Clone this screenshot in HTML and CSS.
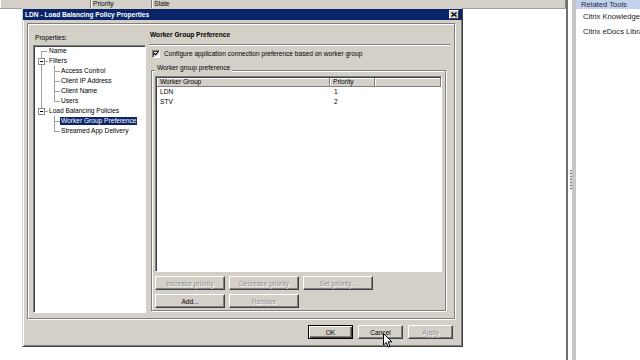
FILE: index.html
```html
<!DOCTYPE html>
<html lang="en">
<head>
    <meta charset="UTF-8">
    <title>LDN - Load Balancing Policy Properties</title>
    <link rel="stylesheet" href="styles.css">
</head>
<body>

    <div class="app">
        <div class="main">
            <div class="colhead">
                <span class="col c-name"></span>
                <span class="col c-prio">Priority</span>
                <span class="col c-state">State</span>
            </div>
            <div class="list"></div>
        </div>
        <div class="splitter"><span class="grip"></span></div>
        <div class="side">
            <div class="side-head">Related Tools</div>
            <ul class="side-links">
                <li>Citrix Knowledge Center</li>
                <li>Citrix eDocs Library</li>
            </ul>
        </div>
    </div>

    <div class="dialog">
        <div class="titlebar">
            <span>LDN - Load Balancing Policy Properties</span>
            <span class="close">
                <svg width="6" height="5" viewBox="0 0 6 5"><path d="M0.5 0.5 L5.5 4.5 M5.5 0.5 L0.5 4.5" stroke="#000" stroke-width="1.3"/></svg>
            </span>
        </div>

        <div class="frame">
            <div class="props">
                <div class="props-label">Properties:</div>
                <div class="tree">
                    <div class="node"><span class="c1 l-first"></span><span class="txt">Name</span></div>
                    <div class="node"><span class="c1 l-full"><i class="box"></i></span><span class="txt">Filters</span></div>
                    <div class="node"><span class="c1 l-pass"></span><span class="c2 l-tee"></span><span class="txt">Access Control</span></div>
                    <div class="node"><span class="c1 l-pass"></span><span class="c2 l-tee"></span><span class="txt">Client IP Address</span></div>
                    <div class="node"><span class="c1 l-pass"></span><span class="c2 l-tee"></span><span class="txt">Client Name</span></div>
                    <div class="node"><span class="c1 l-pass"></span><span class="c2 l-end"></span><span class="txt">Users</span></div>
                    <div class="node"><span class="c1 l-top"><i class="box"></i></span><span class="txt">Load Balancing Policies</span></div>
                    <div class="node"><span class="c1"></span><span class="c2 l-tee"></span><span class="txt selected">Worker Group Preference</span></div>
                    <div class="node"><span class="c1"></span><span class="c2 l-end"></span><span class="txt">Streamed App Delivery</span></div>
                </div>
            </div>

            <div class="page">
                <div class="page-title">Worker Group Preference</div>
                <label class="check">
                    <span class="checkbox">
                        <svg width="7" height="7" viewBox="0 0 7 7"><path d="M1 3 L3 5 L6 1.5" stroke="#000" stroke-width="1.4" fill="none"/></svg>
                    </span>
                    Configure application connection preference based on worker group
                </label>

                <fieldset class="group">
                    <legend>Worker group preference</legend>
                    <div class="listview">
                        <div class="lv-head">
                            <span class="lv-h h-group">Worker Group</span>
                            <span class="lv-h h-prio">Priority</span>
                            <span class="lv-h h-rest"></span>
                        </div>
                        <div class="lv-row"><span class="cell-group">LDN</span><span class="cell-prio">1</span></div>
                        <div class="lv-row"><span class="cell-group">STV</span><span class="cell-prio">2</span></div>
                    </div>
                    <div class="btnrow">
                        <button class="btn" disabled>Increase priority</button>
                        <button class="btn" disabled>Decrease priority</button>
                        <button class="btn" disabled>Set priority...</button>
                    </div>
                    <div class="btnrow">
                        <button class="btn">Add...</button>
                        <button class="btn" disabled>Remove</button>
                    </div>
                </fieldset>
            </div>
        </div>

        <div class="footer">
            <button class="btn small default">OK</button>
            <button class="btn small">Cancel</button>
            <button class="btn small" disabled>Apply</button>
        </div>
    </div>

    <svg class="cursor" width="10" height="16" viewBox="0 0 10 16">
        <path d="M0.5 0.5 L0.5 12 L3.3 9.4 L5.3 14.2 L7 13.4 L5.1 8.8 L8.8 8.8 Z" fill="#fff" stroke="#000" stroke-width="1"/>
    </svg>

</body>
</html>
```

FILE: styles.css
```css
* {
    box-sizing: border-box;
}
body {
    margin: 0;
    width: 640px;
    height: 360px;
    overflow: hidden;
    position: relative;
    font-family: "Liberation Sans", Arial, sans-serif;
    font-size: 6.6px;
    color: #000;
    background-color: #fff;
}

/* console behind the dialog */
.app {
    display: flex;
    height: 360px;
}
.main {
    width: 566px;
    display: flex;
    flex-direction: column;
}
.colhead {
    display: flex;
    height: 9px;
    background-color: #d4d0c8;
    border-bottom: 1px solid #a0a0a0;
    line-height: 8px;
    overflow: hidden;
}
.col {
    padding-left: 2px;
    border-right: 1px solid #808080;
    box-shadow: inset 1px 0 #fff;
}
.c-name {
    width: 91px;
}
.c-prio {
    width: 61px;
}
.c-state {
    flex: 1;
}
.list {
    flex: 1;
    background-color: #fff;
}
.splitter {
    width: 10px;
    display: flex;
    align-items: center;
    background-color: #fff;
    border-left: 2px solid #707070;
    border-right: 4px solid #c6c6c6;
}
.grip {
    width: 3px;
    height: 20px;
    margin-left: 2px;
    background: repeating-linear-gradient(#7a7a7a 0 1px, #dcdcdc 1px 3px);
}
.side {
    flex: 1;
    background-color: #fff;
    overflow: hidden;
    white-space: nowrap;
    font-size: 7.6px;
}
.side-head {
    height: 9px;
    line-height: 9px;
    padding-left: 5px;
    background-color: #c3d1e9;
    color: #1b2a48;
}
.side-links {
    list-style: none;
    margin: 0;
    padding: 0 0 0 7px;
    color: #222;
}
.side-links li {
    line-height: 15px;
}

/* dialog */
.dialog {
    position: absolute;
    left: 22px;
    top: 8px;
    width: 441px;
    height: 339px;
    display: flex;
    flex-direction: column;
    background-color: #d4d0c8;
    border: 1px solid;
    border-color: #d4d0c8 #404040 #404040 #d4d0c8;
    box-shadow: inset 1px 1px #fff, inset -1px -1px #808080;
}
.titlebar {
    height: 11px;
    display: flex;
    align-items: center;
    justify-content: space-between;
    padding: 0 3px 0 2px;
    background-color: #0a246a;
    color: #fff;
    font-weight: bold;
}
.close {
    width: 10px;
    height: 9px;
    display: flex;
    align-items: center;
    justify-content: center;
    background-color: #d4d0c8;
    border: 1px solid;
    border-color: #fff #404040 #404040 #fff;
}
.frame {
    margin: 3px 7px 0 4px;
    height: 296px;
    display: flex;
    border: 1px solid #808080;
    box-shadow: inset 1px 1px #fff, 1px 1px #fff;
}
.props {
    display: flex;
    flex-direction: column;
    padding: 9px 0 0 5px;
}
.props-label {
    height: 10px;
    line-height: 10px;
    padding-left: 2px;
}
.tree {
    width: 113px;
    height: 268px;
    margin-top: 2px;
    padding: 0 1px;
    background-color: #fff;
    border: 1px solid;
    border-color: #808080 #fff #fff #808080;
    box-shadow: inset 1px 1px #404040;
}
.node {
    display: flex;
    height: 10px;
    line-height: 10px;
    white-space: nowrap;
}
.c1, .c2 {
    flex: none;
    height: 10px;
    display: flex;
    align-items: center;
    background-repeat: no-repeat;
}
.c1 {
    width: 13px;
}
.c2 {
    width: 12px;
}
.l-first {
    background-image: linear-gradient(#a0a0a0, #a0a0a0), linear-gradient(#a0a0a0, #a0a0a0);
    background-position: 6px 5px, 6px 5px;
    background-size: 1px 5px, 6px 1px;
}
.l-full, .l-pass {
    background-image: linear-gradient(#a0a0a0, #a0a0a0);
    background-position: 6px 0;
    background-size: 1px 10px;
}
.l-top {
    background-image: linear-gradient(#a0a0a0, #a0a0a0);
    background-position: 6px 0;
    background-size: 1px 4px;
}
.l-tee {
    background-image: linear-gradient(#a0a0a0, #a0a0a0), linear-gradient(#a0a0a0, #a0a0a0);
    background-position: 6px 0, 6px 5px;
    background-size: 1px 10px, 6px 1px;
}
.l-end {
    background-image: linear-gradient(#a0a0a0, #a0a0a0), linear-gradient(#a0a0a0, #a0a0a0);
    background-position: 6px 0, 6px 5px;
    background-size: 1px 6px, 6px 1px;
}
.box {
    width: 7px;
    height: 7px;
    margin-left: 3px;
    border: 1px solid #8a8a8a;
    background: #fff linear-gradient(#000, #000) center / 3px 1px no-repeat;
    position: relative;
}
.box::after {
    content: "";
    position: absolute;
    left: 6px;
    top: 2px;
    width: 3px;
    height: 1px;
    background-color: #a0a0a0;
}
.txt {
    padding: 0 1px;
}
.selected {
    background-color: #0a246a;
    color: #fff;
    height: 8px;
    line-height: 8px;
    margin-top: 1px;
}

/* property page */
.page {
    flex: 1;
    margin-left: 3px;
    display: flex;
    flex-direction: column;
}
.page-title {
    font-weight: bold;
    line-height: 8px;
    padding: 7px 0 5px 1px;
    margin-right: 4px;
    border-bottom: 1px solid #808080;
    box-shadow: 0 1px #fff;
}
.check {
    display: flex;
    align-items: center;
    gap: 4px;
    height: 11px;
    margin: 3px 0 0 3px;
}
.checkbox {
    width: 8px;
    height: 8px;
    display: flex;
    align-items: center;
    justify-content: center;
    background-color: #fff;
    border: 1px solid;
    border-color: #808080 #fff #fff #808080;
    box-shadow: inset 1px 1px #404040;
}
.group {
    margin: 5px 8px 0 2px;
    padding: 0 3px 2px 3px;
    border: 1px solid #808080;
    box-shadow: inset 1px 1px #fff, 1px 1px #fff;
    min-width: 0;
}
.group legend {
    padding: 0 2px 4px 2px;
    line-height: 8px;
    background-color: #d4d0c8;
}
.listview {
    height: 196px;
    background-color: #fff;
    border: 1px solid;
    border-color: #808080 #fff #fff #808080;
    box-shadow: inset 1px 1px #404040;
    padding: 1px 0 0 1px;
}
.lv-head {
    display: flex;
    height: 9px;
    line-height: 8px;
}
.lv-h {
    padding-left: 3px;
    background-color: #d4d0c8;
    border-right: 1px solid #808080;
    border-bottom: 1px solid #808080;
    box-shadow: inset 1px 1px #fff;
}
.h-group {
    width: 173px;
}
.h-prio {
    width: 45px;
}
.h-rest {
    flex: 1;
}
.lv-row {
    display: flex;
    height: 10px;
    line-height: 10px;
}
.lv-row:first-of-type {
    margin-top: 1px;
}
.cell-group {
    width: 173px;
    padding-left: 3px;
}
.cell-prio {
    padding-left: 4px;
}
.btnrow {
    display: flex;
    gap: 4px;
    margin-top: 4px;
}
.btn {
    width: 70px;
    height: 14px;
    padding: 0;
    font-family: inherit;
    font-size: 6.6px;
    color: #000;
    background-color: #d4d0c8;
    border: 1px solid;
    border-color: #fff #404040 #404040 #fff;
    box-shadow: inset -1px -1px #808080;
}
.btn:disabled {
    color: #8c8c8c;
    text-shadow: 1px 1px #fff;
}
.footer {
    display: flex;
    justify-content: flex-end;
    gap: 5px;
    margin-top: 6px;
    padding-right: 9px;
}
.btn.small {
    width: 45px;
}
.btn.default {
    border: 1px solid #000;
    box-shadow: inset 1px 1px #fff, inset -1px -1px #404040, inset -2px -2px #808080;
}

.cursor {
    position: absolute;
    left: 383px;
    top: 333px;
}
```
